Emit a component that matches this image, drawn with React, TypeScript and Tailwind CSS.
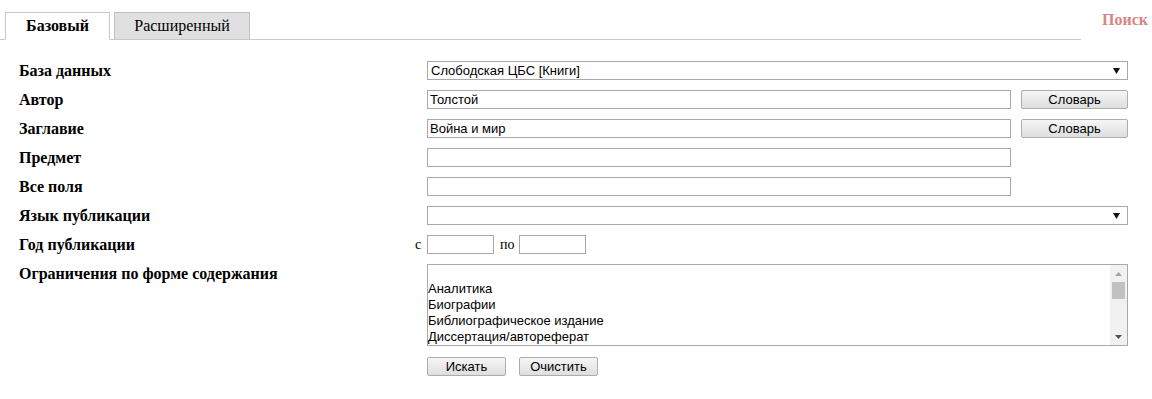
import React from 'react';

const serif = "font-['Liberation_Serif','Times_New_Roman',serif]";
const sans = "font-['Liberation_Sans',Arial,sans-serif]";

const btn =
  `${sans} h-[19px] text-[13px] text-black border border-[#adadad] rounded-[2px] bg-gradient-to-b from-[#f6f6f6] to-[#dedede] leading-[17px] flex items-center justify-center`;

const input = `${sans} h-[19px] border border-[#a9a9a9] bg-white text-[13px] leading-[17px] px-[2px] text-black`;

function Row({ label, children }: { label: string; children?: React.ReactNode }) {
  return (
    <div className="flex items-center h-[29px]">
      <div className="w-[408px] font-bold text-[16px] leading-[19px]">{label}</div>
      {children}
    </div>
  );
}

function Arrow() {
  return (
    <svg width="7" height="6" viewBox="0 0 7 6" className="shrink-0">
      <path d="M0 0 H7 L3.5 6 Z" fill="#111" />
    </svg>
  );
}

export default function App() {
  const options = ['', 'Аналитика', 'Биографии', 'Библиографическое издание', 'Диссертация/автореферат'];

  return (
    <div className={`${serif} w-[1152px] h-[399px] bg-white text-black`}>
      {/* tabs */}
      <div className="flex pt-[12px]">
        <div className="w-[1081px] flex gap-[4px] pl-[5px] border-b border-[#c8c8c8]">
          <div className="w-[105px] h-[28px] -mb-px bg-white border border-[#c8c8c8] border-b-white flex items-center justify-center font-bold text-[16px]">
            Базовый
          </div>
          <div className="w-[136px] h-[27px] bg-[#e0e0e0] border border-[#c0c0c0] border-b-0 flex items-center justify-center text-[16px]">
            Расширенный
          </div>
        </div>
        <div className="ml-[21px] -mt-[4px] font-bold text-[16px] text-[#d98484]">Поиск</div>
      </div>

      {/* form */}
      <div className="pl-[19px] pt-[16px]">
        <Row label="База данных">
          <div className={`${input} w-[701px] border-[#7b9fd8] flex items-center justify-between pl-[3px] pr-[7px]`}>
            <span>Слободская ЦБС [Книги]</span>
            <Arrow />
          </div>
        </Row>
        <Row label="Автор">
          <div className={`${input} w-[584px]`}>Толстой</div>
          <div className={`${btn} ml-[10px] w-[107px]`}>Словарь</div>
        </Row>
        <Row label="Заглавие">
          <div className={`${input} w-[584px]`}>Война и мир</div>
          <div className={`${btn} ml-[10px] w-[107px]`}>Словарь</div>
        </Row>
        <Row label="Предмет">
          <div className={`${input} w-[584px]`} />
        </Row>
        <Row label="Все поля">
          <div className={`${input} w-[584px]`} />
        </Row>
        <Row label="Язык публикации">
          <div className={`${input} w-[701px] flex items-center justify-end pr-[7px]`}>
            <Arrow />
          </div>
        </Row>
        <div className="flex items-center h-[29px]">
          <div className="w-[396px] font-bold text-[16px] leading-[19px]">Год публикации</div>
          <span className="w-[12px] text-[14px]">с</span>
          <div className={`${input} w-[67px]`} />
          <span className="ml-[6px] mr-[4px] text-[14px]">по</span>
          <div className={`${input} w-[67px]`} />
        </div>
        <div className="flex items-start pt-[5px]">
          <div className="w-[408px] font-bold text-[16px] leading-[19px]">Ограничения по форме содержания</div>
          <div className="w-[701px] h-[82px] border border-[#a9a9a9] flex">
            <div className={`${sans} flex-1 text-[13px] leading-[16px]`}>
              {options.map((o, i) => (
                <div key={i} className="h-[16px]">{o}</div>
              ))}
            </div>
            <div className="w-[17px] bg-[#f1f1f1] flex flex-col items-center">
              <div className="h-[17px] flex items-center justify-center">
                <svg width="7" height="4" viewBox="0 0 7 4"><path d="M0 4 H7 L3.5 0 Z" fill="#a3a3a3" /></svg>
              </div>
              <div className="w-[13px] h-[17px] bg-[#c1c1c1]" />
              <div className="flex-1" />
              <div className="h-[17px] flex items-center justify-center">
                <svg width="7" height="4" viewBox="0 0 7 4"><path d="M0 0 H7 L3.5 4 Z" fill="#505050" /></svg>
              </div>
            </div>
          </div>
        </div>
        <div className="flex pl-[408px] pt-[11px] gap-[13px]">
          <div className={`${btn} w-[79px]`}>Искать</div>
          <div className={`${btn} w-[79px]`}>Очистить</div>
        </div>
      </div>
    </div>
  );
}
